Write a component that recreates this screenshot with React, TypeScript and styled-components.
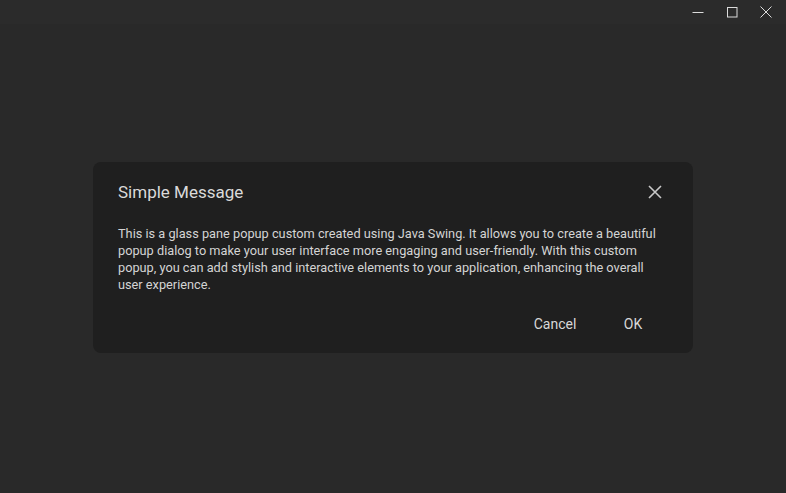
import React from "react";
import styled, { createGlobalStyle } from "styled-components";

const Global = createGlobalStyle`
  html, body { margin: 0; padding: 0; background: #292929; }
  body { font-family: Roboto, "Noto Sans", sans-serif; }
`;

const Window = styled.div`
  width: 786px;
  height: 493px;
  display: flex;
  flex-direction: column;
  background: #292929;
  overflow: hidden;
`;

const TitleBar = styled.div`
  height: 24px;
  flex: 0 0 24px;
  background: #2b2b2b;
  display: flex;
  justify-content: flex-end;
  align-items: stretch;
  padding-right: 3px;
`;

const WinButton = styled.div`
  width: 34px;
  display: flex;
  align-items: center;
  justify-content: center;
  color: #dcdcdc;
`;

const Content = styled.div`
  flex: 1;
  display: flex;
  justify-content: center;
  padding-top: 138px;
`;

const Dialog = styled.div`
  width: 600px;
  height: 191px;
  box-sizing: border-box;
  background: #1f1f1f;
  border-radius: 8px;
  padding: 18px 25px 0 25px;
  display: flex;
  flex-direction: column;
`;

const Header = styled.div`
  display: flex;
  align-items: center;
  justify-content: space-between;
  height: 24px;
`;

const Title = styled.div`
  font-size: 17px;
  color: #dadada;
`;

const CloseButton = styled.div`
  width: 24px;
  height: 24px;
  display: flex;
  align-items: center;
  justify-content: center;
  margin-right: 1px;
  color: #c8c8c8;
`;

const Message = styled.p`
  margin: 21px 0 0 0;
  font-size: 12.75px;
  line-height: 17px;
  color: #d4d4d4;
`;

const Actions = styled.div`
  display: flex;
  justify-content: flex-end;
  gap: 20px;
  margin-top: 16px;
  margin-right: 12px;
`;

const ActionButton = styled.div<{ $w: number }>`
  width: ${(p) => p.$w}px;
  height: 30px;
  display: flex;
  align-items: center;
  justify-content: center;
  font-size: 14px;
  color: #d8d8d8;
`;

export default function App() {
  return (
    <>
      <Global />
      <Window>
        <TitleBar>
          <WinButton>
            <svg width="12" height="12" viewBox="0 0 12 12">
              <line x1="0.5" y1="6.5" x2="11.5" y2="6.5" stroke="currentColor" strokeWidth="1" />
            </svg>
          </WinButton>
          <WinButton>
            <svg width="12" height="12" viewBox="0 0 12 12">
              <rect x="1.5" y="1.5" width="9.5" height="9.5" fill="none" stroke="currentColor" strokeWidth="1" />
            </svg>
          </WinButton>
          <WinButton>
            <svg width="12" height="12" viewBox="0 0 12 12">
              <path d="M0.5 0.5 L11.5 11.5 M11.5 0.5 L0.5 11.5" stroke="currentColor" strokeWidth="1" />
            </svg>
          </WinButton>
        </TitleBar>
        <Content>
          <Dialog>
            <Header>
              <Title>Simple Message</Title>
              <CloseButton>
                <svg width="14" height="14" viewBox="0 0 14 14">
                  <path d="M1 1 L13 13 M13 1 L1 13" stroke="currentColor" strokeWidth="1.6" />
                </svg>
              </CloseButton>
            </Header>
            <Message>
              This is a glass pane popup custom created using Java Swing. It allows you to create a beautiful
              popup dialog to make your user interface more engaging and user-friendly. With this custom
              popup, you can add stylish and interactive elements to your application, enhancing the overall
              user experience.
            </Message>
            <Actions>
              <ActionButton $w={70}>Cancel</ActionButton>
              <ActionButton $w={46}>OK</ActionButton>
            </Actions>
          </Dialog>
        </Content>
      </Window>
    </>
  );
}
